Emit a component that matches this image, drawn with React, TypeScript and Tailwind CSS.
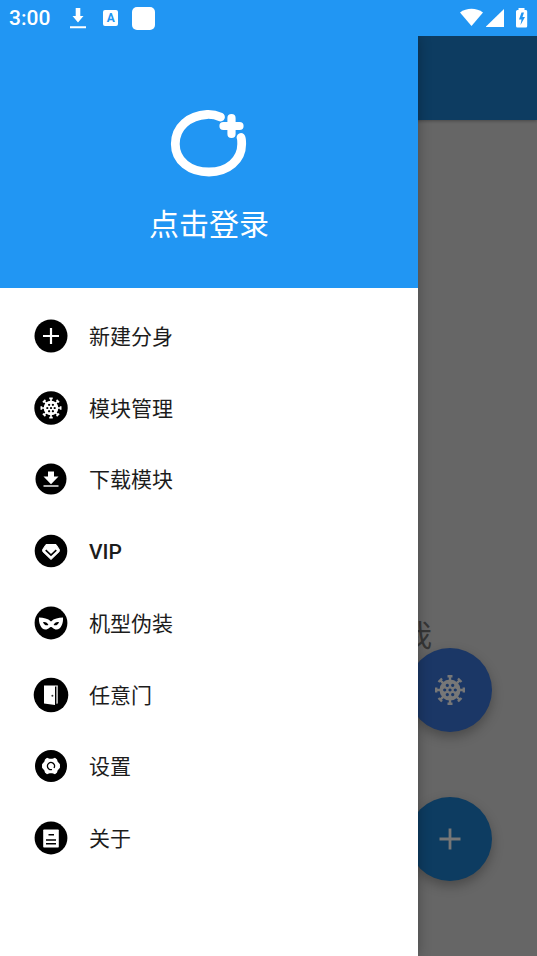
import React from 'react';

const Virus = () => (
  <g>
    {[0, 45, 90, 135, 180, 225, 270, 315].map((angle) => (
      <path key={angle} d="M0-9V-14M-2.5-13.8H2.5" transform={`rotate(${angle})`} stroke="currentColor" strokeWidth="2.4" />
    ))}
    <path
      fill="currentColor"
      fillRule="evenodd"
      d="M0-10.5A10.5 10.5 0 1 1 0 10.5A10.5 10.5 0 1 1 0-10.5Z
        M-2.7-6.2a1.6 1.6 0 1 0 .01 0ZM2.7-6.2a1.6 1.6 0 1 0 .01 0Z
        M-5.3-1.6a1.6 1.6 0 1 0 .01 0ZM0-1.6a1.6 1.6 0 1 0 .01 0ZM5.3-1.6a1.6 1.6 0 1 0 .01 0Z
        M-2.7 3a1.6 1.6 0 1 0 .01 0ZM2.7 3a1.6 1.6 0 1 0 .01 0Z"
    />
  </g>
);

interface DiscPropsI {
  r: number,
  children: React.ReactNode,
}

// black round badge, the glyph is drawn around 0,0
const Disc = (props: DiscPropsI) => (
  <svg className="size-9 shrink-0 text-white" viewBox="-18 -18 36 36" fill="none" aria-hidden="true">
    <circle r={props.r} fill="#000" />
    {props.children}
  </svg>
);

const menuItems = [
  {
    label: '新建分身',
    icon: <Disc r={16.5}><path d="M-8 0H8M0-8V8" stroke="#fff" strokeWidth="2.2" /></Disc>,
  },
  {
    label: '模块管理',
    icon: <Disc r={16.7}><g transform="scale(.7)"><Virus /></g></Disc>,
  },
  {
    label: '下载模块',
    icon: (
      <Disc r={15.5}>
        <path d="M-3-7.5H3V-2.5H7.5L0 5.2L-7.5-2.5H-3Z" fill="#fff" />
        <path d="M-7.5 7H7.5" stroke="#fff" strokeWidth="1.4" />
      </Disc>
    ),
  },
  {
    label: 'VIP',
    icon: (
      <Disc r={16.3}>
        <path d="M-5-6.5H5L8.3-1.5V.5L0 8.5L-8.3 .5V-1.5Z" fill="#fff" stroke="#fff" strokeLinejoin="round" />
        <path d="M-5.3-.8L0 4.2L5.3-.8" stroke="#000" strokeWidth="1.6" />
      </Disc>
    ),
  },
  {
    label: '机型伪装',
    icon: (
      <Disc r={16.4}>
        <path
          d="M-12-5.5C-7.5-5.5-3-4.5 0-1.5C3-4.5 7.5-5.5 12-5.5C12.5 0 10 6.5 5.5 6.5C2.5 6.5 1.5 4 0 4C-1.5 4-2.5 6.5-5.5 6.5C-10 6.5-12.5 0-12-5.5Z"
          fill="#fff"
        />
        <path d="M-8-.8C-5.5-1.3-3.5 0-2.6 2C-5 3-7 1.7-8-.8ZM8-.8C5.5-1.3 3.5 0 2.6 2C5 3 7 1.7 8-.8Z" fill="#000" />
      </Disc>
    ),
  },
  {
    label: '任意门',
    icon: (
      <Disc r={17.3}>
        <path d="M-7-9.5H6.8V8.5H5.2V-8.5H4V10L-7 8.5Z" fill="#fff" />
        <path d="M5.8-8.5V8.5" stroke="#777" strokeWidth="1" />
        <circle cx="1.4" cy=".8" r="1" fill="#333" />
      </Disc>
    ),
  },
  {
    label: '设置',
    icon: (
      <Disc r={16}>
        <path
          d="M-3.8-7.4L-1.5-6.6H1.5L3.8-7.4L5.3-6.2L6-4L8.2-1.5V1.5L6 4L5.3 6.2L3.8 7.4L1.5 6.6H-1.5L-3.8 7.4L-5.3 6.2L-6 4L-8.2 1.5V-1.5L-6-4L-5.3-6.2Z"
          fill="#fff"
          stroke="#fff"
          strokeWidth="1.5"
          strokeLinejoin="round"
        />
        <path d="M1 3.5A3.6 3.6 0 1 1 3 2" stroke="#000" strokeWidth="1.3" />
      </Disc>
    ),
  },
  {
    label: '关于',
    icon: (
      <Disc r={16.4}>
        <rect x="-7.8" y="-8.5" width="15.6" height="18" rx=".8" fill="#fff" />
        <path d="M-2.5-3.2H3M-5 2H5M-5 5.8H5" stroke="#000" strokeWidth="1.4" />
      </Disc>
    ),
  },
];

const StatusBar = () => (
  <div className="relative z-20 flex h-9 items-center justify-between bg-[#2196f3] pl-[9px] pr-[9px] text-white">
    <div className="flex items-center">
      <span className="text-[21px] leading-6 font-medium">3:00</span>
      <svg className="ml-5 h-[22px] w-4" viewBox="0 0 16 22" aria-hidden="true">
        <path d="M5.7 1H10.3V9H13.5L8 15.5L2.5 9H5.7ZM0 19.3H16V21.3H0Z" fill="#fff" />
      </svg>
      <span className="ml-[17px] flex h-4 w-[15px] justify-center rounded-xs bg-white text-[12px] leading-4 font-bold text-[#2196f3]">A</span>
      <span className="ml-[14px] size-[23px] rounded-[5px] bg-white" />
    </div>
    <svg className="h-5 w-[69px]" viewBox="0 0 69 20" fill="#fff" aria-hidden="true">
      <path d="M1 4.5C7.5-.5 17.500-.5 24 4.5L12.500 18Z" />
      <path d="M27 19V18.500L45 1V19Z" />
      <path
        fillRule="evenodd"
        d="M59.500 0H65.500V2H67Q68.200 2 68.200 3.500V18Q68.200 19.500 67 19.500H58.500Q57 19.500 57 18V3.500Q57 2 58.500 2H59.500ZM62.500 4.500L60 11.500H62.500L61.500 17L66 9H63.500L65 4.500Z"
      />
    </svg>
  </div>
);

const Drawer = () => (
  <aside className="absolute inset-y-0 left-0 z-10 flex w-[418px] max-w-[85%] flex-col bg-white shadow-[0_0_12px_rgba(0,0,0,0.3)]">
    <button type="button" className="flex h-[252px] w-full shrink-0 flex-col items-center bg-[#2196f3] pt-[72px] text-white">
      <svg className="h-[70px] w-20" viewBox="0 0 80 70" fill="none" stroke="#fff" strokeLinecap="round" aria-hidden="true">
        <path
          strokeWidth="8.8"
          d="M51.500 9C47 7 43 6.300 38 6.500C20 7.500 6.300 19 6.300 36C6.300 53 21 64 40 64C59 64 72.700 52 72.700 36C72.700 33 72.700 31 72 29.500"
        />
        <path strokeWidth="8.200" d="M62.500 10V26M54.500 18H70.500" />
      </svg>
      <span className="mt-[26px] text-[30px] leading-[42px] font-normal">点击登录</span>
    </button>
    <nav className="mt-3 grid h-[574px] auto-rows-fr">
      {menuItems.map((item) => (
        <a key={item.label} href="#" className="flex items-center gap-5 pl-[33px] text-[21px] leading-8 text-[#1c1c1c]">
          {item.icon}
          <span className={item.label === 'VIP' ? 'pt-0.5 font-medium' : 'pt-0.5 font-normal'}>{item.label}</span>
        </a>
      ))}
    </nav>
  </aside>
);

export default function App() {
  return (
    <div className="flex min-h-screen flex-col bg-[#666] font-[Roboto,'Noto_Sans_CJK_SC',sans-serif]">
      <StatusBar />
      <div className="relative flex min-h-[850px] grow flex-col overflow-hidden">
        <header className="h-[84px] shrink-0 bg-[#0d3c61] shadow-[0_1px_3px_rgba(0,0,0,0.3)]" />
        <main className="flex grow flex-col items-end justify-end pr-[45px] pb-[75px]">
          <p className="mr-[60px] text-[30px] leading-6 text-[#363636]">我</p>
          <div className="flex flex-col gap-[65px]">
            <button
              type="button"
              aria-label="模块管理"
              className="flex size-[84px] items-center justify-center rounded-full bg-[#1b3766] text-[#777] shadow-[0_5px_12px_rgba(0,0,0,0.28)]"
            >
              <svg className="size-8" viewBox="-16 -16 32 32" fill="none" aria-hidden="true"><Virus /></svg>
            </button>
            <button
              type="button"
              aria-label="新建分身"
              className="flex size-[84px] items-center justify-center rounded-full bg-[#0d3c61] text-[#777] shadow-[0_5px_12px_rgba(0,0,0,0.28)]"
            >
              <svg className="size-6" viewBox="0 0 24 24" aria-hidden="true">
                <path d="M1.5 12H22.5M12 1.5V22.5" stroke="currentColor" strokeWidth="2.8" />
              </svg>
            </button>
          </div>
        </main>
        <Drawer />
      </div>
    </div>
  );
}
